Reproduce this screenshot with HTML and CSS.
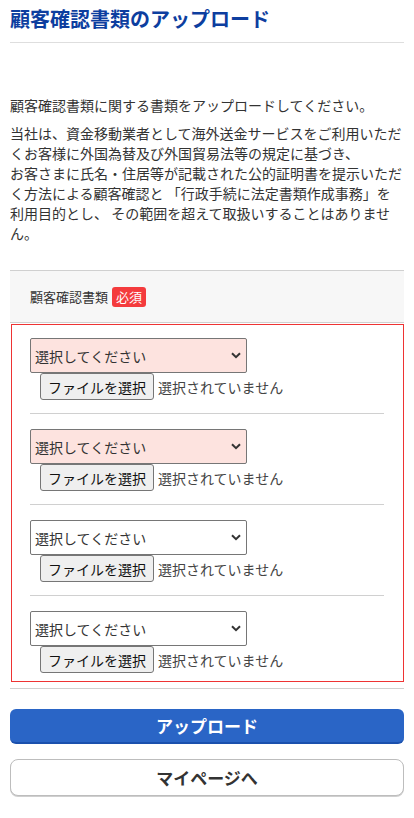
FILE: index.html
```html
<!DOCTYPE html>
<html lang="ja">
<head>
<meta charset="utf-8">
<title>顧客確認書類のアップロード</title>
<link rel="stylesheet" href="styles.css">
</head>
<body>
<header class="page-head">
  <h1 class="page-title">顧客確認書類のアップロード</h1>
</header>
<p class="lead">顧客確認書類に関する書類をアップロードしてください。</p>
<p class="notice">当社は、資金移動業者として海外送金サービスをご利用いただくお客様に外国為替及び外国貿易法等の規定に基づき、<br>お客さまに氏名・住居等が記載された公的証明書を提示いただく方法による顧客確認と 「行政手続に法定書類作成事務」を利用目的とし、 その範囲を超えて取扱いすることはありません。</p>

<section class="form-section">
  <div class="field-label">
    <span class="label-text">顧客確認書類</span><span class="badge">必須</span>
  </div>
  <div class="upload-box">
    <div class="upload-item">
      <div class="select invalid"><span class="select-text">選択してください</span><svg class="chev" width="10" height="7" viewBox="0 0 10 7"><path d="M1 1.2 L5 5.2 L9 1.2" fill="none" stroke="#333" stroke-width="2"/></svg></div>
      <div class="file-row"><span class="file-btn">ファイルを選択</span><span class="file-status">選択されていません</span></div>
    </div>
    <div class="upload-item">
      <div class="select invalid"><span class="select-text">選択してください</span><svg class="chev" width="10" height="7" viewBox="0 0 10 7"><path d="M1 1.2 L5 5.2 L9 1.2" fill="none" stroke="#333" stroke-width="2"/></svg></div>
      <div class="file-row"><span class="file-btn">ファイルを選択</span><span class="file-status">選択されていません</span></div>
    </div>
    <div class="upload-item">
      <div class="select"><span class="select-text">選択してください</span><svg class="chev" width="10" height="7" viewBox="0 0 10 7"><path d="M1 1.2 L5 5.2 L9 1.2" fill="none" stroke="#333" stroke-width="2"/></svg></div>
      <div class="file-row"><span class="file-btn">ファイルを選択</span><span class="file-status">選択されていません</span></div>
    </div>
    <div class="upload-item">
      <div class="select"><span class="select-text">選択してください</span><svg class="chev" width="10" height="7" viewBox="0 0 10 7"><path d="M1 1.2 L5 5.2 L9 1.2" fill="none" stroke="#333" stroke-width="2"/></svg></div>
      <div class="file-row"><span class="file-btn">ファイルを選択</span><span class="file-status">選択されていません</span></div>
    </div>
  </div>
</section>

<div class="actions">
  <button class="btn btn-primary">アップロード</button>
  <button class="btn btn-secondary">マイページへ</button>
</div>
</body>
</html>
```

FILE: styles.css
```css
* { box-sizing: border-box; }
html, body { margin: 0; padding: 0; background: #fff; }
body {
  padding: 0 10px;
  font-family: "Noto Sans CJK JP", "Noto Sans", sans-serif;
  color: #333;
  font-size: 14px;
  line-height: 20px;
}
.page-head {
  padding-top: 4px;
  padding-bottom: 8px;
  border-bottom: 1px solid #dedede;
}
.page-title {
  margin: 0;
  font-size: 20px;
  line-height: 30px;
  font-weight: bold;
  color: #0d3e9f;
}
.lead {
  margin: 52px 0 0;
}
.notice {
  margin: 8px 0 0;
}
.form-section {
  margin-top: 27px;
  border-top: 1px solid #d0d0d0;
  border-bottom: 1px solid #d0d0d0;
  padding-bottom: 6px;
}
.field-label {
  background: #f7f7f7;
  height: 52px;
  border-bottom: 1px solid #d0d0d0;
  padding-left: 20px;
  display: flex;
  align-items: center;
  gap: 4px;
  font-size: 13px;
}
.label-text { color: #333; }
.badge {
  display: inline-block;
  background: #f43b3d;
  color: #fff;
  font-size: 13px;
  line-height: 20px;
  padding: 0 4px;
  border-radius: 3px;
}
.upload-box {
  margin: 1px 0 0 1px;
  border: 1px solid #ee3333;
  padding: 13px 19px 8px 18px;
}
.upload-item {
  padding-bottom: 13px;
  border-bottom: 1px solid #d0d0d0;
  margin-bottom: 15px;
}
.upload-item:last-child {
  border-bottom: none;
  margin-bottom: 0;
  padding-bottom: 0;
}
.select {
  width: 217px;
  height: 35px;
  border: 1px solid #767676;
  border-radius: 2px;
  background: #fff;
  display: flex;
  align-items: center;
  justify-content: space-between;
  padding: 0 5px 0 4px;
  font-size: 14px;
  color: #333;
}
.select.invalid {
  background: #fde3df;
}
.chev { display: block; }
.file-row {
  display: flex;
  align-items: center;
  margin-left: 10px;
  gap: 4px;
}
.file-btn {
  display: inline-flex;
  align-items: center;
  height: 27px;
  padding: 0 7px;
  background: #efefef;
  border: 1px solid #767676;
  border-radius: 3px;
  font-size: 14px;
  color: #111;
}
.file-status {
  font-size: 14px;
  color: #444;
}
.actions {
  margin-top: 20px;
  display: flex;
  flex-direction: column;
  gap: 15px;
  padding-bottom: 20px;
}
.btn {
  display: block;
  width: 100%;
  font-family: "Noto Sans CJK JP", "Noto Sans", sans-serif;
  font-weight: bold;
  font-size: 17px;
  margin: 0;
  cursor: pointer;
}
.btn-primary {
  height: 35px;
  background: #2a65c6;
  color: #fff;
  border: none;
  border-bottom: 2px solid #1a50ad;
  border-radius: 6px;
}
.btn-secondary {
  height: 37px;
  background: #fff;
  color: #333;
  border: 1px solid #bdbdbd;
  border-radius: 8px;
  box-shadow: 0 1px 0 #cfcfcf;
}
```
